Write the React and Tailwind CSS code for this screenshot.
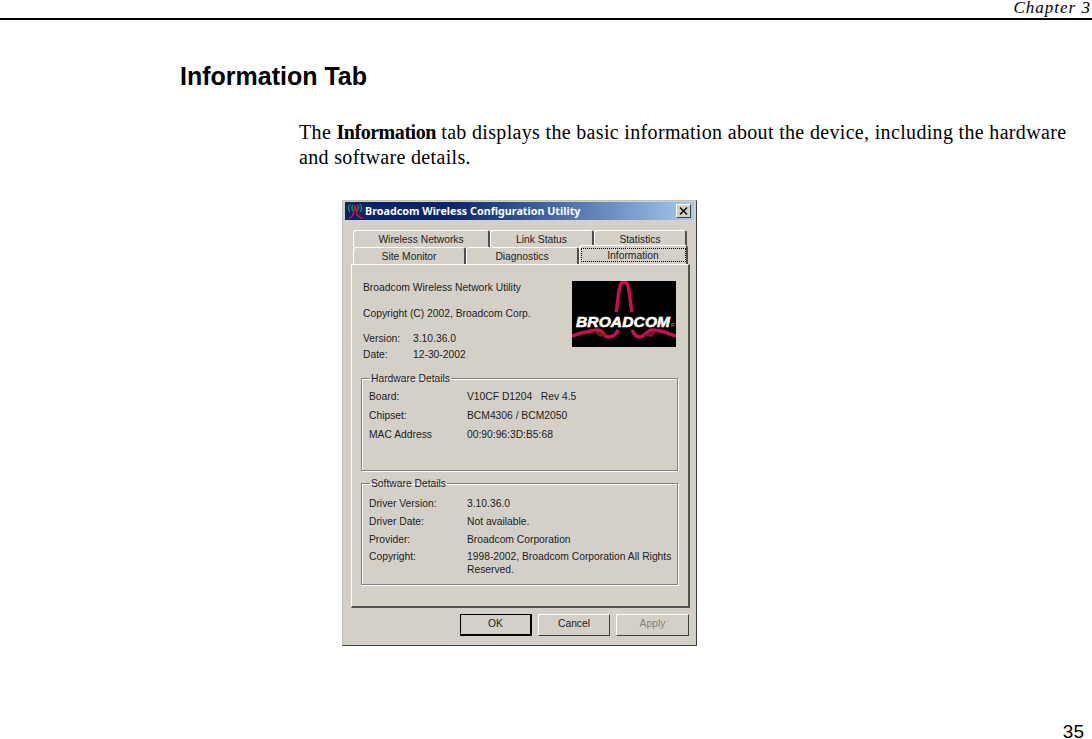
import React from 'react';

const uiFont = "font-['Liberation_Sans',sans-serif]";

const AntennaIcon = () => (
  <svg width="18" height="17" viewBox="0 0 18 17" fill="none" className="shrink-0">
    <path d="M3 9C1 6.5 1 3 3.5 1M6 8C4.5 6.5 4.5 3.5 6 2" stroke="#18c840" strokeWidth="1" />
    <path d="M13 9C15 6.5 15 3 12.5 1M10 8C11.5 6.5 11.5 3.5 10 2" stroke="#18c840" strokeWidth="1" />
    <path d="M2 15C4 15 5 13 6 12C7 9 7 5 8 3C9 5 9 9 10 12C11 13 12 15 16 15" stroke="#e01030" strokeWidth="1.4" />
  </svg>
);

const BroadcomLogo = () => (
  <svg width="104" height="66" viewBox="0 0 104 66" className="block bg-black shrink-0">
    <path d="M44 31C46 22 46 12 48 5C49 1 51 1 52 1C53 1 55 1 56 5C58 12 58 22 60 31" fill="none" stroke="#c8104a" strokeWidth="3.5" />
    <path d="M0 55C5 54 9 51 14 51C19 50 22 49 26 49C31 49 32 56 36 56C41 56 44 54 46 49" fill="none" stroke="#c8104a" strokeWidth="3.5" />
    <path d="M60 49C62 54 64 56 68 56C72 56 75 49 80 49C84 49 88 50 93 51C96 52 99 54 104 55" fill="none" stroke="#c8104a" strokeWidth="3.5" />
    <path d="M21 50C26 50 30 52 34 54L28 56Z" fill="#6b2410" />
    <path d="M70 54C76 53 79 51 84 50L80 56Z" fill="#8a1038" />
    <text x="4" y="46" fill="#fff" fontFamily="'Liberation Sans', sans-serif" fontWeight="700" fontStyle="italic" fontSize="15.5" stroke="#fff" strokeWidth="0.6" textLength="94">BROADCOM</text>
    <text x="99" y="46" fill="#999" fontFamily="'Liberation Sans', sans-serif" fontSize="5">R</text>
  </svg>
);

const Tab = ({ label, width, selected }) => (
  <div
    className={`flex justify-center shrink-0 bg-[#d4d0c8] border-t border-l border-white border-r-2 border-r-[#505050] rounded-t-[3px] ${width} ${selected ? 'h-[19px] -mt-[2px] pt-[2px]' : 'h-[17px] pt-[1px]'}`}
  >
    <span className={selected ? 'border border-dotted border-black w-[105px] h-[14px] leading-[13px] text-center' : 'leading-[15px]'}>{label}</span>
  </div>
);

const Row = ({ label, value, height = 'h-[18px]' }) => (
  <div className={`flex ${height} items-center`}>
    <span className="w-[98px] shrink-0">{label}</span>
    <span className="whitespace-pre">{value}</span>
  </div>
);

const DialogButton = ({ label, width, isDefault, disabled }) => (
  <div
    className={`flex items-center justify-center pb-[2px] h-[22px] ${width} border ${
      isDefault ? 'border-black border-r-2 border-b-2' : 'border-t-white border-l-white border-r-[#404040] border-b-[#404040]'
    } ${disabled ? 'text-[#808080]' : ''}`}
  >
    {label}
  </div>
);

const App = () => {
  return (
    <div className="relative w-[1092px] h-[739px] bg-white overflow-hidden text-black flex flex-col">
      <header className="h-[20px] border-b-2 border-black text-right pr-[1px] font-['Liberation_Serif',serif] italic text-[17px] leading-[16px] tracking-[1px]">
        Chapter 3
      </header>

      <h1 className="mt-[40px] ml-[180px] font-['Liberation_Sans',sans-serif] font-bold text-[25px] leading-[32px]">
        Information Tab
      </h1>

      <p className="mt-[28px] ml-[299px] w-[790px] font-['Liberation_Serif',serif] text-[20px] leading-[25px] tracking-[0.33px]">
        The <b className="tracking-[-0.45px]">Information</b> tab displays the basic information about the device, including the hardware
        <br />
        and software details.
      </p>

      {/* dialog screenshot */}
      <div
        className={`mt-[30px] ml-[342px] w-[355px] h-[446px] bg-[#d4d0c8] border border-[#c0c0c0] border-r-[#404040] border-b-[#404040] px-[2px] pt-[1px] text-[10.3px] text-[#1c1c1c] ${uiFont}`}
      >
        <div className="h-[18px] flex items-center pl-[2px] pr-[3px] bg-gradient-to-r from-[#0a246a] from-30% to-[#a6caf0]">
          <AntennaIcon />
          <span className="text-white font-bold font-['Noto_Sans',sans-serif] text-[10.75px] leading-none">Broadcom Wireless Configuration Utility</span>
          <div className="ml-auto w-[15px] h-[14px] bg-[#d4d0c8] border border-t-white border-l-white border-r-[#404040] border-b-[#404040] flex items-center justify-center">
            <svg width="9" height="8" viewBox="0 0 9 8">
              <path d="M1 0.5L8 7.5M8 0.5L1 7.5" stroke="#000" strokeWidth="1.4" />
            </svg>
          </div>
        </div>

        <div className="mt-[10px] ml-[8px] flex h-[17px]">
          <Tab label="Wireless Networks" width="w-[137px]" />
          <Tab label="Link Status" width="w-[104px]" />
          <Tab label="Statistics" width="w-[93px]" />
        </div>
        <div className="ml-[8px] flex h-[17px]">
          <Tab label="Site Monitor" width="w-[113px]" />
          <Tab label="Diagnostics" width="w-[113px]" />
          <Tab label="Information" width="w-[109px]" selected />
        </div>

        <div className="ml-[6px] w-[339px] h-[344px] border border-t-white border-l-white border-r-2 border-r-[#505050] border-b-2 border-b-[#505050] px-[9px] pt-[14px]">
          <div className="flex justify-between pr-[3px]">
            <div className="pl-[2px]">
              <div className="h-[17px] leading-[17px]">Broadcom Wireless Network Utility</div>
              <div className="mt-[9px] h-[17px] leading-[17px]">Copyright (C) 2002, Broadcom Corp.</div>
              <div className="mt-[9px] h-[16px] flex items-center">
                <span className="w-[50px]">Version:</span>3.10.36.0
              </div>
              <div className="h-[16px] flex items-center">
                <span className="w-[50px]">Date:</span>12-30-2002
              </div>
            </div>
            <div className="pt-[2px]">
              <BroadcomLogo />
            </div>
          </div>

          <fieldset className="mt-[8px] w-[317px] min-w-0 h-[100px] border border-[#808080] shadow-[1px_1px_0_#fff,inset_1px_1px_0_#fff] px-[7px]">
            <legend className="ml-[1px] px-[1px] pt-[1px] leading-[13px]">Hardware Details</legend>
            <div className="mt-[2px]">
              <Row label="Board:" value="V10CF D1204   Rev 4.5" height="h-[19px]" />
              <Row label="Chipset:" value="BCM4306 / BCM2050" height="h-[19px]" />
              <Row label="MAC Address" value="00:90:96:3D:B5:68" height="h-[19px]" />
            </div>
          </fieldset>

          <fieldset className="mt-[5px] w-[317px] min-w-0 h-[109px] border border-[#808080] shadow-[1px_1px_0_#fff,inset_1px_1px_0_#fff] px-[7px]">
            <legend className="ml-[1px] px-[1px] pt-[1px] leading-[13px]">Software Details</legend>
            <div className="mt-[5px]">
              <Row label="Driver Version:" value="3.10.36.0" />
              <Row label="Driver Date:" value="Not available." />
              <Row label="Provider:" value="Broadcom Corporation" height="h-[17px]" />
              <div className="flex mt-[2px]">
                <span className="w-[98px] shrink-0 leading-[13px]">Copyright:</span>
                <span className="leading-[13px] whitespace-nowrap">
                  1998-2002, Broadcom Corporation All Rights
                  <br />
                  Reserved.
                </span>
              </div>
            </div>
          </fieldset>
        </div>

        <div className="mt-[6px] ml-[115px] flex gap-[6px]">
          <DialogButton label="OK" width="w-[72px]" isDefault />
          <DialogButton label="Cancel" width="w-[72px]" />
          <DialogButton label="Apply" width="w-[73px]" disabled />
        </div>
      </div>

      <footer className="mt-auto -mb-[2px] pr-[8px] text-right font-['Liberation_Sans',sans-serif] text-[19px] leading-[19px]">35</footer>
    </div>
  );
};

export default App;
